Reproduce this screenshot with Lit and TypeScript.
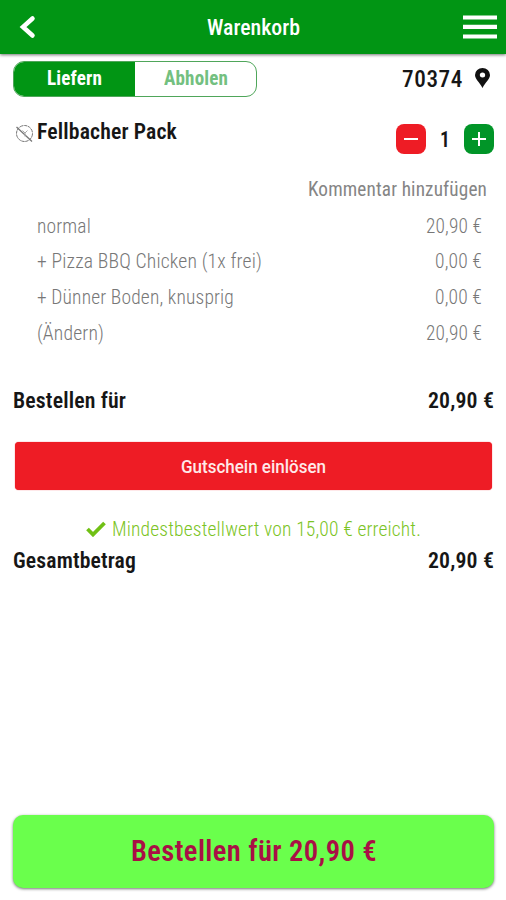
import { LitElement, html, css } from "lit";
import { customElement, property } from "lit/decorators.js";

/** Single-line label, condensed to the width it is given. */
@customElement("fit-label")
class FitLabel extends LitElement {
  @property() text = "";
  @property({ type: Number }) width = 0;

  static styles = css`
    :host { display: block; flex: none; white-space: nowrap; }
    .ink { display: inline-block; transform-origin: 0 50%; }
  `;

  render() {
    return html`<span class="ink">${this.text}</span>`;
  }

  updated() {
    const ink = this.renderRoot.querySelector(".ink") as HTMLElement;
    this.style.width = `${this.width}px`;
    ink.style.transform = `scaleX(${this.width / ink.getBoundingClientRect().width})`;
  }
}

const lines: [string, number, string, number][] = [
  ["normal", 54, "20,90 €", 56],
  ["+ Pizza BBQ Chicken (1x frei)", 225, "0,00 €", 47],
  ["+ Dünner Boden, knusprig", 197, "0,00 €", 47],
  ["(Ändern)", 67, "20,90 €", 56],
];

const label = (text: string, width: number, cls: string) =>
  html`<fit-label class=${cls} .text=${text} .width=${width}></fit-label>`;

@customElement("app-root")
class AppRoot extends LitElement {
  static styles = css`
    :host {
      display: flex; flex-direction: column; box-sizing: border-box;
      width: 506px; height: 900px; overflow: hidden; background: #fff; color: #161616;
      font-family: "Roboto Condensed", Roboto, "Liberation Sans", sans-serif;
      font-stretch: 75%; font-size: 20px; letter-spacing: 0.15px;
    }
    svg { display: block; flex: none; }
    header {
      flex: none; height: 54px; box-sizing: border-box; padding: 0 9px 0 19px;
      display: grid; grid-template-columns: 188px 93px 1fr; align-items: center;
      background: #019514; color: #fff; box-shadow: 0 1px 3px rgba(0,0,0,.55);
    }
    header .menu { justify-self: end; }
    .title { font-size: 22.5px; font-weight: 500; letter-spacing: 0; }
    .mode { flex: none; height: 36px; margin: 7px 16px 0 13px; display: flex; justify-content: space-between; align-items: center; }
    .toggle { display: flex; width: 244px; height: 36px; box-sizing: border-box; border: 1px solid #4fa65a; border-radius: 11px; overflow: hidden; }
    .toggle div { flex: 1; display: flex; align-items: center; justify-content: center; padding-bottom: 2px; font-weight: 700; color: #73c080; }
    .toggle .on { background: #019514; color: #fff; }
    .place { display: flex; align-items: center; gap: 12px; }
    .place svg { margin-bottom: 2px; }
    .zip { font-size: 24px; font-weight: 500; letter-spacing: .6px; }
    .item { flex: none; height: 30px; margin: 27px 12px 0 15px; display: flex; justify-content: space-between; align-items: center; }
    .name { display: flex; align-items: center; gap: 3px; padding-bottom: 15px; }
    .name svg { margin-top: 4px; }
    .strong { font-size: 21.5px; font-weight: 600; }
    .stepper { display: flex; align-items: center; gap: 14.25px; }
    .step { width: 30px; height: 30px; border-radius: 8px; display: grid; place-items: center; }
    .minus { background: #ee1c25; }
    .plus { background: #019528; }
    .count { font-size: 22.5px; font-weight: 600; }
    .comment { flex: none; height: 36px; margin: 17px 19px 1px 0; display: flex; align-items: center; justify-content: flex-end; color: #858585; }
    .lines { flex: none; margin: 0 24px 0 37px; color: #777; }
    .line { height: 35.6px; display: flex; align-items: center; justify-content: space-between; }
    .thin { font-weight: 400; }
    .light { font-weight: 340; }
    .sum { flex: none; height: 30px; margin: 0 12px 0 13px; display: flex; align-items: center; justify-content: space-between; }
    .first { margin-top: 35px; }
    .voucher { flex: none; height: 48px; margin: 27px 14px 0 15px; border-radius: 4px; background: #ee1c25; color: #ffe9e9; display: flex; align-items: center; justify-content: center; box-shadow: 0 0 1px #ee1c25; }
    .vtext { font-family: Roboto, sans-serif; font-stretch: 100%; font-size: 18px; font-weight: 500; letter-spacing: 0; }
    .minimum { flex: none; height: 30px; margin: 24px 0 1px; display: flex; align-items: center; justify-content: center; gap: 6px; color: #7bc424; }
    .order { flex: none; height: 73px; box-sizing: border-box; padding-bottom: 2px; margin: auto 12px 12px 13px; border-radius: 10px; background: #6aff4c; color: #a90f45; display: flex; align-items: center; justify-content: center; box-shadow: 0 1px 3px rgba(0,0,0,.55); }
    .big { font-size: 29px; font-weight: 600; letter-spacing: .4px; }
  `;

  render() {
    return html`
      <header>
        <svg width="17" height="24" viewBox="0 0 17 24"><path d="M13.500 3.500 4 12l9.500 8.500" fill="none" stroke="#fff" stroke-width="4.500" stroke-linecap="round"/></svg>
        ${label("Warenkorb", 93, "title")}
        <svg class="menu" width="34" height="26" viewBox="0 0 34 26"><path d="M0 3.500h34M0 12.800h34M0 22.500h34" stroke="#fff" stroke-width="4.200"/></svg>
      </header>
      <section class="mode">
        <div class="toggle">
          <div class="on">${label("Liefern", 55, "")}</div>
          <div>${label("Abholen", 64, "")}</div>
        </div>
        <div class="place">
          ${label("70374", 61, "zip")}
          <svg width="15" height="20" viewBox="0 0 14 20" preserveAspectRatio="none"><path fill="#111" fill-rule="evenodd" d="M7 0a7 7 0 0 0-7 7c0 4 4.500 7.500 7 13 2.500-5.500 7-9 7-13a7 7 0 0 0-7-7Zm0 4.500a2.500 2.500 0 1 1 0 5 2.500 2.500 0 0 1 0-5Z"/></svg>
        </div>
      </section>
      <section class="item">
        <div class="name">
          <svg width="19" height="19" viewBox="0 0 19 19" fill="none" stroke="#777"><circle cx="9.500" cy="9.500" r="8" stroke-dasharray="3.500 .6"/><path d="m1.500 3 15.500 14.500" stroke-width="1.300"/><path d="M7.500 6.500 10 9l2.500-2.500M10 9v3.500" stroke="#aaa"/></svg>
          ${label("Fellbacher Pack", 140, "strong")}
        </div>
        <div class="stepper">
          <div class="step minus"><svg width="14" height="14"><path d="M0 7h14" stroke="#fff" stroke-width="2"/></svg></div>
          ${label("1", 10, "count")}
          <div class="step plus"><svg width="14" height="14"><path d="M0 7h14M7 0v14" stroke="#fff" stroke-width="2"/></svg></div>
        </div>
      </section>
      <div class="comment">${label("Kommentar hinzufügen", 179, "thin")}</div>
      <section class="lines">
        ${lines.map(([t, w, p, pw]) => html`<div class="line">${label(t, w, "light")}${label(p, pw, "light")}</div>`)}
      </section>
      <div class="sum first">${label("Bestellen für", 113, "strong")}${label("20,90 €", 66, "strong")}</div>
      <div class="voucher">${label("Gutschein einlösen", 145, "vtext")}</div>
      <div class="minimum">
        <svg width="20" height="16" viewBox="0 0 20 16"><path d="m1.500 8 5.500 5.500L18.500 2" fill="none" stroke="#70c014" stroke-width="3.800"/></svg>
        ${label("Mindestbestellwert von 15,00 € erreicht.", 309, "light")}
      </div>
      <div class="sum">${label("Gesamtbetrag", 123, "strong")}${label("20,90 €", 66, "strong")}</div>
      <div class="order">${label("Bestellen für 20,90 €", 246, "big")}</div>
    `;
  }
}
